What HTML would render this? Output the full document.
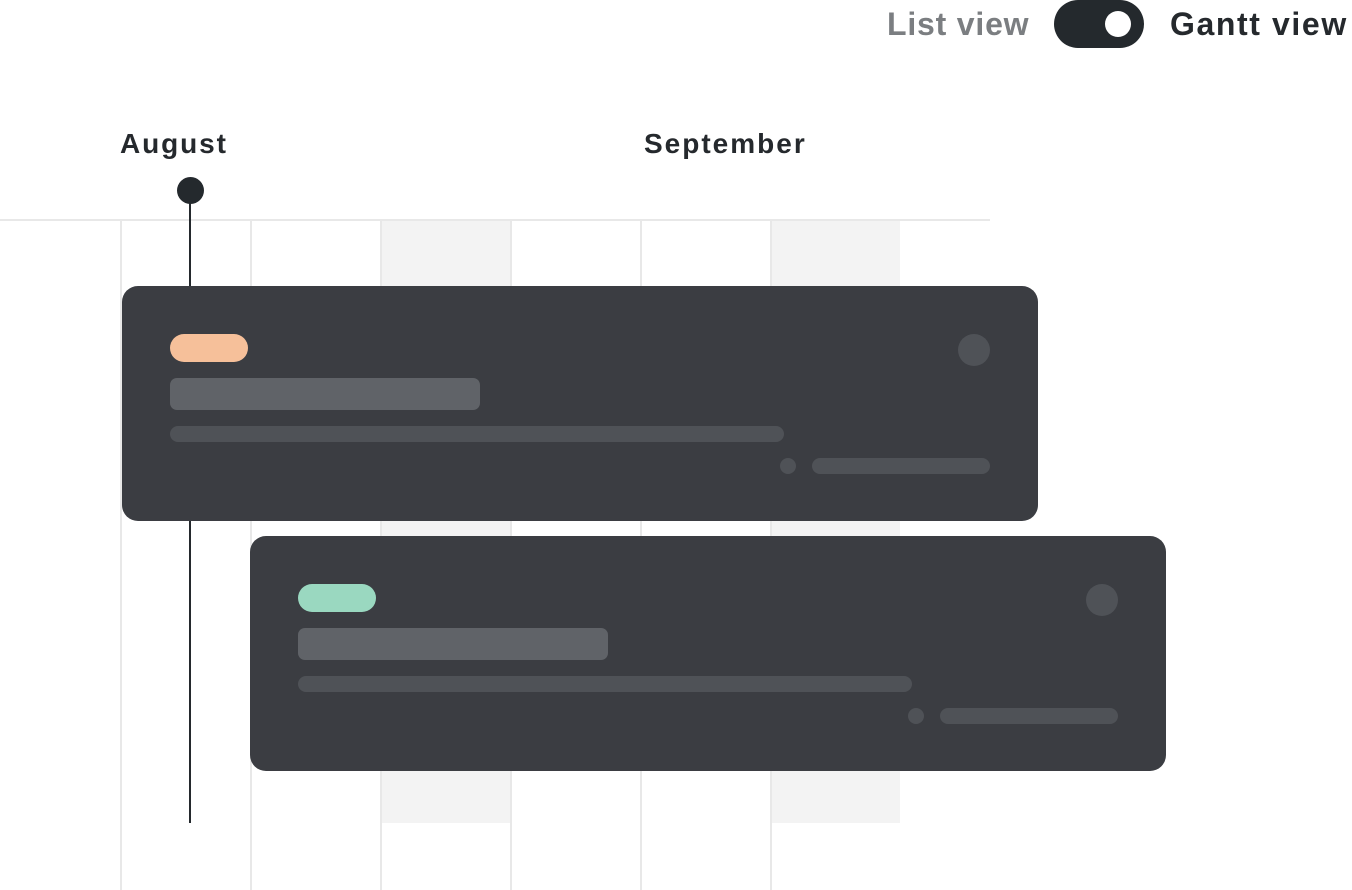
<!DOCTYPE html>
<html><head><meta charset="utf-8"><style>
*{margin:0;padding:0;box-sizing:border-box}
body{width:1352px;height:890px;background:#fff;position:relative;overflow:hidden;font-family:"Liberation Sans",sans-serif;font-weight:bold}
.a{position:absolute}
.vl{position:absolute;top:220px;width:2px;height:670px;background:#e8e8e8}
.sh{position:absolute;top:220px;height:603px;background:#f3f3f3}
.card{position:absolute;width:916px;height:235px;background:#3b3d42;border-radius:16px}
.card div{position:absolute}
</style></head><body>
<div class="a" style="left:887px;top:6px;font-size:32px;color:#7b7e81;white-space:nowrap;letter-spacing:0.8px">List view</div>
<div class="a" style="left:1054px;top:0;width:90px;height:48px;border-radius:24px;background:#24292d"></div>
<div class="a" style="left:1105px;top:11px;width:26px;height:26px;border-radius:50%;background:#fff"></div>
<div class="a" style="left:1170px;top:6px;font-size:32px;color:#25292d;white-space:nowrap;letter-spacing:1.6px">Gantt view</div>

<div class="a" style="left:120px;top:128px;font-size:28px;color:#25292d;letter-spacing:1.9px">August</div>
<div class="a" style="left:644px;top:128px;font-size:28px;color:#25292d;letter-spacing:2px">September</div>

<div class="sh" style="left:381px;width:129px"></div>
<div class="sh" style="left:771px;width:129px"></div>
<div class="a" style="left:0;top:219px;width:990px;height:2px;background:#e8e8e8"></div>
<div class="vl" style="left:120px"></div>
<div class="vl" style="left:250px"></div>
<div class="vl" style="left:380px"></div>
<div class="vl" style="left:510px"></div>
<div class="vl" style="left:640px"></div>
<div class="vl" style="left:770px"></div>

<div class="a" style="left:189px;top:190px;width:2px;height:633px;background:#24292d"></div>
<div class="a" style="left:177px;top:177px;width:27px;height:27px;border-radius:50%;background:#24292d"></div>

<div class="card" style="left:122px;top:286px">
<div style="left:48px;top:48px;width:78px;height:28px;border-radius:14px;background:#f6c09a"></div>
<div style="left:48px;top:92px;width:310px;height:32px;border-radius:7px;background:#606368"></div>
<div style="left:48px;top:140px;width:614px;height:16px;border-radius:8px;background:#4f5257"></div>
<div style="left:836px;top:48px;width:32px;height:32px;border-radius:50%;background:#4f5257"></div>
<div style="left:658px;top:172px;width:16px;height:16px;border-radius:50%;background:#4f5257"></div>
<div style="left:690px;top:172px;width:178px;height:16px;border-radius:8px;background:#4f5257"></div>
</div>
<div class="card" style="left:250px;top:536px">
<div style="left:48px;top:48px;width:78px;height:28px;border-radius:14px;background:#9ad8c0"></div>
<div style="left:48px;top:92px;width:310px;height:32px;border-radius:7px;background:#606368"></div>
<div style="left:48px;top:140px;width:614px;height:16px;border-radius:8px;background:#4f5257"></div>
<div style="left:836px;top:48px;width:32px;height:32px;border-radius:50%;background:#4f5257"></div>
<div style="left:658px;top:172px;width:16px;height:16px;border-radius:50%;background:#4f5257"></div>
<div style="left:690px;top:172px;width:178px;height:16px;border-radius:8px;background:#4f5257"></div>
</div>
</body></html>
